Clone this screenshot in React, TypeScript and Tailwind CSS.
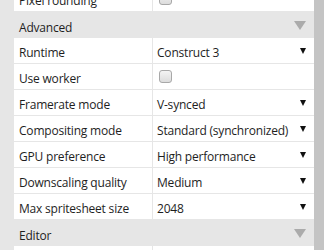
import React from "react";

type Row =
  | { kind: "header"; label: string }
  | { kind: "select"; label: string; value: string }
  | { kind: "check"; label: string };

const rows: Row[] = [
  { kind: "check", label: "Pixel rounding" },
  { kind: "header", label: "Advanced" },
  { kind: "select", label: "Runtime", value: "Construct 3" },
  { kind: "check", label: "Use worker" },
  { kind: "select", label: "Framerate mode", value: "V-synced" },
  { kind: "select", label: "Compositing mode", value: "Standard (synchronized)" },
  { kind: "select", label: "GPU preference", value: "High performance" },
  { kind: "select", label: "Downscaling quality", value: "Medium" },
  { kind: "select", label: "Max spritesheet size", value: "2048" },
  { kind: "header", label: "Editor" },
  { kind: "check", label: "Show grid" },
];

function Checkbox() {
  return (
    <div className="w-[13px] h-[13px] rounded-[3px] border border-[#a8a8a8] bg-gradient-to-b from-[#f4f4f4] to-[#dcdcdc]" />
  );
}

function Arrow() {
  return (
    <svg width="6" height="6" viewBox="0 0 6 6" className="shrink-0">
      <polygon points="0,0 6,0 3,6" fill="#111" />
    </svg>
  );
}

export default function App() {
  return (
    <div
      className="w-[324px] h-[250px] flex overflow-hidden bg-[#e6e6e6] text-[12px] tracking-[-0.2px] text-[#1e1e1e]"
      style={{ fontFamily: '"Open Sans", "Noto Sans", sans-serif' }}
    >
      <div className="w-[14px] shrink-0" />
      <div className="w-[300px] shrink-0 flex flex-col mt-[-14px]">
        {rows.map((r, i) =>
          r.kind === "header" ? (
            <div key={i} className="h-[26px] shrink-0 flex items-center justify-between bg-[#e6e6e6] pl-[5px] pr-[8px]">
              <span className="pt-[5px]">{r.label}</span>
              <svg width="12" height="9" viewBox="0 0 12 9">
                <polygon points="0,0 12,0 6,9" fill="#ababab" />
              </svg>
            </div>
          ) : (
            <div key={i} className="h-[26px] shrink-0 flex bg-white border-b border-[#e6e6e6]">
              <div className="w-[139px] shrink-0 flex items-center pl-[5px] border-r border-[#e6e6e6] whitespace-nowrap">
                <span className="pt-[5px]">{r.label}</span>
              </div>
              <div className="flex-1 flex items-center justify-between pl-[4px] pr-[8px] whitespace-nowrap">
                {r.kind === "select" ? (
                  <>
                    <span className="pt-[5px]">{r.value}</span>
                    <Arrow />
                  </>
                ) : (
                  <div className="pl-[2px]">
                    <Checkbox />
                  </div>
                )}
              </div>
            </div>
          )
        )}
      </div>
      <div className="w-[10px] shrink-0 bg-[#c4c4c4]" />
    </div>
  );
}
